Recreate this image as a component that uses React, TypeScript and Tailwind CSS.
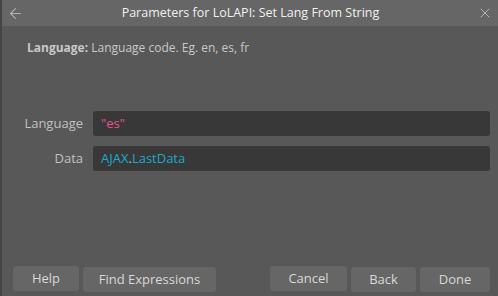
import { ArrowLeft, X } from 'lucide-react';

const Btn = ({ label, w }: { label: string; w: string }) => (
  <button className={`h-[25px] ${w} rounded-[3px] bg-[#666666] text-[13px] text-[#d8d8d8]`}>{label}</button>
);

const App = () => {
  return (
    <div
      className="flex h-[296px] w-[498px] flex-col bg-[#585858] border-l-2 border-[#454545]"
      style={{ fontFamily: '"Open Sans", "Noto Sans", sans-serif' }}
    >
      <div className="flex h-[26px] items-center justify-between bg-[#666666] px-[5px]">
        <ArrowLeft className="h-[17px] w-[17px] text-[#b0b0b0]" strokeWidth={1.5} />
        <span className="text-[12.5px] text-[#f0f0f0]">Parameters for LoLAPI: Set Lang From String</span>
        <X className="h-[16px] w-[16px] text-[#b5b5b5]" strokeWidth={1.5} />
      </div>

      <div className="px-[25px] pt-[13px] text-[12px] text-[#c8c8c8]">
        <span className="font-bold">Language:</span> Language code. Eg. en, es, fr
      </div>

      <div className="mt-[54px] flex flex-col gap-[10px] pr-[8px]">
        <div className="flex items-center">
          <span className="w-[91px] shrink-0 pr-[10px] text-right text-[13px] text-[#c0c0c0]">Language</span>
          <div className="flex h-[25px] flex-1 items-center rounded-[3px] bg-[#383838] px-[8px] text-[13px] text-[#e8508e]">
            "es"
          </div>
        </div>
        <div className="flex items-center">
          <span className="w-[91px] shrink-0 pr-[10px] text-right text-[13px] text-[#c0c0c0]">Data</span>
          <div className="flex h-[25px] flex-1 items-center rounded-[3px] bg-[#383838] px-[8px] text-[13px] text-[#1ea8c8]">
            AJAX<span className="text-[#a8c8d0]">.</span>LastData
          </div>
        </div>
      </div>

      <div className="mt-auto mb-[4px] flex items-center px-[11px] pr-[8px]">
        <Btn label="Help" w="w-[66px]" />
        <div className="ml-[4px]">
          <Btn label="Find Expressions" w="w-[133px]" />
        </div>
        <div className="flex-1" />
        <Btn label="Cancel" w="w-[77px]" />
        <div className="ml-[4px]">
          <Btn label="Back" w="w-[65px]" />
        </div>
        <div className="ml-[4px]">
          <Btn label="Done" w="w-[70px]" />
        </div>
      </div>
    </div>
  );
};

export default App;
